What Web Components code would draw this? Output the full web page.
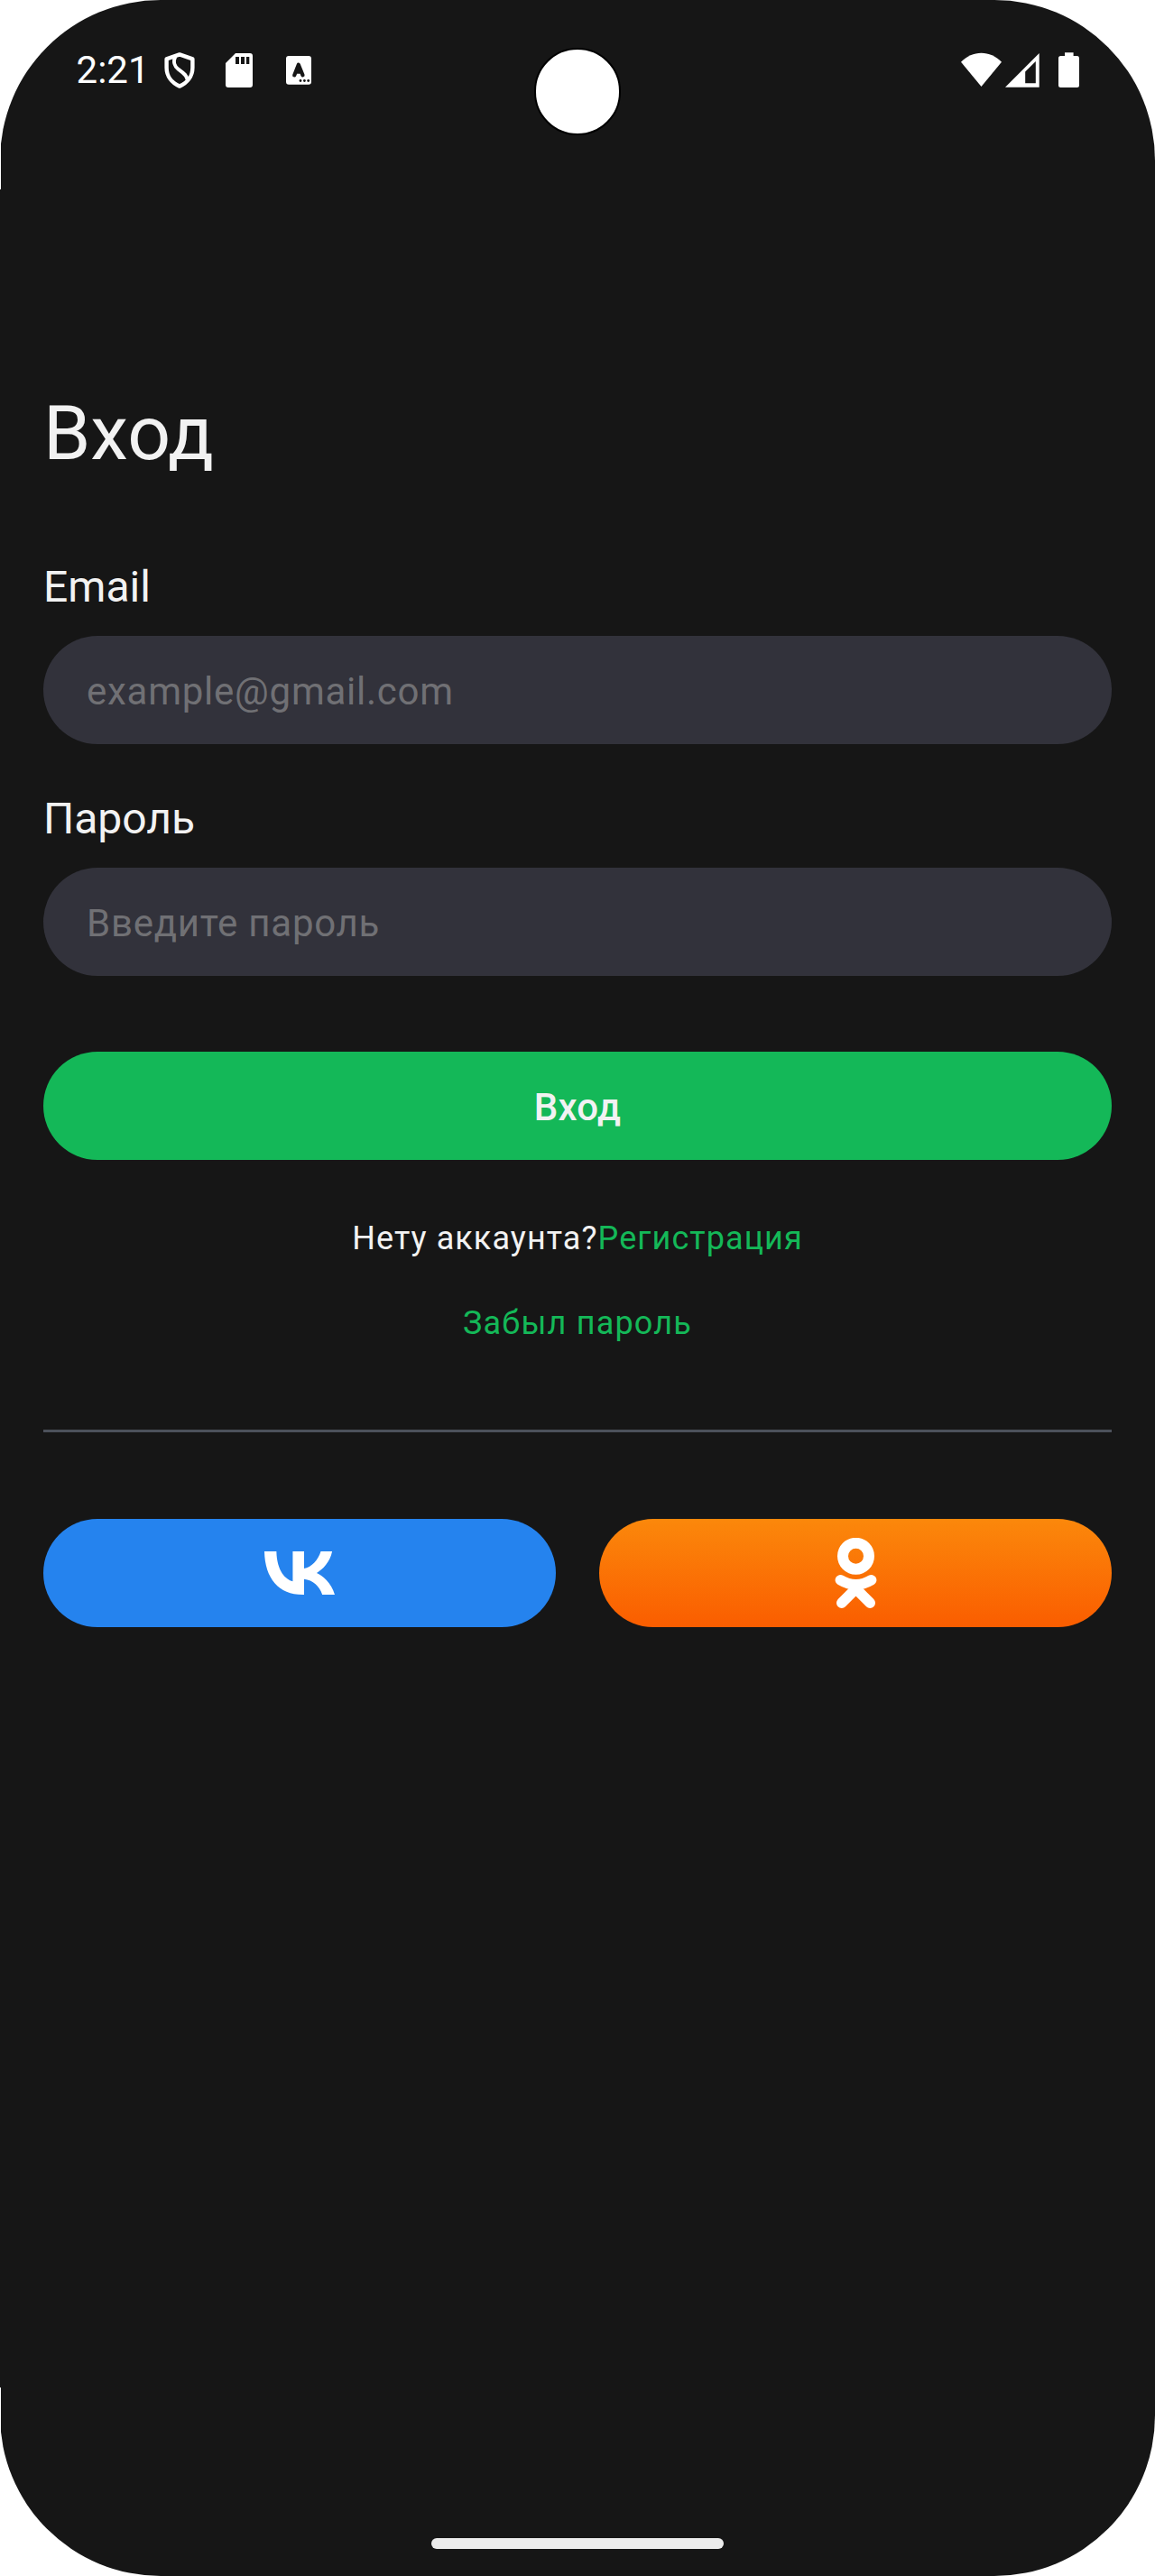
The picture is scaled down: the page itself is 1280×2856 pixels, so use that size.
<!DOCTYPE html>
<html lang="ru">
<head>
<meta charset="utf-8">
<title>Вход</title>
<style>
  html, body { margin: 0; background: #fff; }
  body { font-family: Roboto, "Noto Sans", sans-serif; color: #f2f2f2; }
</style>
</head>
<body>
<phone-screen>
  <status-bar slot="status" time="2:21"></status-bar>
  <login-page></login-page>
</phone-screen>

<script>
const define = (name, html) => {
  const template = document.createElement('template');
  template.innerHTML = html;
  customElements.define(name, class extends HTMLElement {
    constructor() {
      super();
      this.attachShadow({ mode: 'open' }).append(template.content.cloneNode(true));
    }
    connectedCallback() {
      for (const el of this.shadowRoot.querySelectorAll('[data-attr]')) {
        el.textContent = this.getAttribute(el.dataset.attr) || '';
      }
    }
  });
};

define('phone-screen', `
  <style>
    :host {
      display: flex; flex-direction: column; position: relative; box-sizing: border-box;
      width: 1280px; height: 2856px; overflow: hidden; border-radius: 178px;
      background:
        linear-gradient(#fff, #fff) 0 150px / 1px 60px no-repeat,
        linear-gradient(#fff, #fff) 0 2647px / 1px 60px no-repeat,
        #161616;
    }
    .camera {
      position: absolute; left: 591.5px; top: 53px; width: 92.500px; height: 92.500px;
      border: 2.5px solid #000; border-radius: 50%; background: #fff;
    }
    main { flex: 1; }
    .nav { display: flex; justify-content: center; padding-bottom: 30px; }
    .handle { width: 324px; height: 12px; border-radius: 6px; background: #ececec; }
  </style>
  <slot name="status"></slot>
  <div class="camera"></div>
  <main><slot></slot></main>
  <div class="nav"><div class="handle"></div></div>
`);

define('status-bar', `
  <style>
    :host {
      display: flex; justify-content: space-between; align-items: center;
      box-sizing: border-box; height: 156px; padding: 0 83px 0 84.6px; color: #fff;
    }
    .group { display: flex; align-items: center; }
    span { font-size: 42px; line-height: 48px; }
    svg { display: block; flex: none; }
  </style>
  <div class="group">
    <span data-attr="time"></span>
    <svg style="margin-left:15.4px" width="36" height="44" viewBox="181 56 36 44" fill="none" stroke="#fff" stroke-linejoin="round">
      <path stroke-width="4.4" d="M199 60.4 L213.4 65.4 V75 C213.4 84.5 207.5 92 199 95.6 C190.500 92 184.600 84.500 184.600 75 V65.400 Z"/>
      <path stroke-width="4" d="M194.400 62.500 C191.500 68 193.500 73.500 197.500 76.700 C202.500 80.500 207.300 83 207.400 88.500"/>
    </svg>
    <svg style="margin-left:33px" width="30" height="38" viewBox="250 59 30 38" fill="#fff">
      <path fill-rule="evenodd" d="M261 59 H277 Q280 59 280 62 V94 Q280 97 277 97 H253 Q250 97 250 94 V70 Z M261 63 V71 H265 V63 Z M267 63 V71 H271 V63 Z M273 63 V71 H276.300 V63 Z"/>
    </svg>
    <svg style="margin-left:37px" width="28" height="32" viewBox="317 62 28 32">
      <rect x="317" y="62" width="28" height="31.700" rx="3" fill="#fff"/>
      <path d="M326.200 83.400 L330.800 71.700 L335.500 83.400 M328 79.700 H333.700" fill="none" stroke="#161616" stroke-width="4.200" stroke-linecap="round" stroke-linejoin="round"/>
      <g fill="#161616"><circle cx="333" cy="89.500" r="1.400"/><circle cx="337.400" cy="89.500" r="1.400"/><circle cx="341.700" cy="89.500" r="1.400"/></g>
    </svg>
  </div>
  <svg width="132" height="40" viewBox="1065 58 132 40" fill="#fff">
    <path d="M1087.500 96 L1065 68.800 C1077.500 55.300 1097.500 55.300 1110 68.800 Z"/>
    <path fill-rule="evenodd" d="M1114 96.700 L1151.700 59 V96.700 Z M1136.200 79.500 V92.300 H1147.800 V68 Z"/>
    <path d="M1180 58.300 H1189.600 V62 H1194 Q1196 62 1196 64.500 V94.500 Q1196 97 1193.500 97 H1175.500 Q1173 97 1173 94.500 V64.500 Q1173 62 1175.500 62 H1180 Z"/>
  </svg>
`);

define('form-field', `
  <style>
    :host { display: block; }
    label { display: block; font-size: 48px; line-height: 56px; }
    .box {
      display: flex; align-items: center; box-sizing: border-box; height: 120px;
      margin-top: 26px; padding: 4px 48px 0; border-radius: 60px; background: #32323b;
      color: #707074; font-size: 42px; line-height: 48px; letter-spacing: .75px;
    }
  </style>
  <label data-attr="label"></label>
  <div class="box"><span data-attr="placeholder"></span></div>
`);

define('primary-button', `
  <style>
    :host {
      display: flex; align-items: center; justify-content: center; box-sizing: border-box;
      height: 120px; padding-top: 4px; border-radius: 60px; background: #14b858;
      font-size: 42px; line-height: 48px; font-weight: 500; letter-spacing: .3px;
    }
  </style>
  <slot></slot>
`);

define('text-link', `
  <style>:host { display: inline-block; color: #14b858; }</style><slot></slot>
`);

define('social-button', `
  <style>
    :host {
      display: flex; flex: 1; align-items: center; justify-content: center;
      height: 120px; border-radius: 60px; background: var(--fill);
    }
  </style>
  <slot></slot>
`);

define('vk-logo', `
  <style>:host, svg { display: block; }</style>
  <svg width="78" height="48" viewBox="8.1 14.6 32.02 19.98" preserveAspectRatio="none" fill="#fff">
    <path d="M25.54 34.58C14.6 34.58 8.36 27.08 8.1 14.6H13.58C13.76 23.76 17.8 27.64 21 28.44V14.6H26.16V22.5C29.32 22.16 32.64 18.56 33.76 14.6H38.92C38.06 19.48 34.46 23.08 31.9 24.56C34.46 25.76 38.56 28.9 40.12 34.58H34.44C33.22 30.78 30.18 27.84 26.16 27.44V34.58Z"/>
  </svg>
`);

define('ok-logo', `
  <style>:host, svg { display: block; }</style>
  <svg width="47" height="78" viewBox="924.500 1705 47 78" fill="none" stroke="#fff" stroke-linecap="round">
    <circle cx="948" cy="1725.300" r="14.500" stroke-width="12"/>
    <path stroke-width="11.600" d="M930.900 1751.800 Q948 1762 965.100 1751.800 M932.300 1777.100 L948 1761.400 L963.700 1777.100"/>
  </svg>
`);

define('login-page', `
  <style>
    :host { display: flex; flex-direction: column; padding: 275px 48px 0; }
    h1 { margin: 0 0 92px; font-size: 84px; line-height: 100px; font-weight: 400; }
    form-field + form-field { margin-top: 55px; }
    primary-button { margin-top: 84px; }
    p { margin: 0; text-align: center; font-size: 36px; line-height: 42px; }
    .signup { display: flex; justify-content: center; margin-top: 66px; letter-spacing: 1.08px; }
    .forgot { margin-top: 52px; letter-spacing: 1.2px; }
    hr { width: 100%; height: 3px; margin: 97px 0 96px; border: 0; background: #4c515b; }
    .social { display: flex; gap: 48px; }
    .vk { --fill: #2583ee; }
    .ok { --fill: linear-gradient(#fb880b, #fa5d00); }
  </style>
  <h1>Вход</h1>
  <form-field label="Email" placeholder="example@gmail.com"></form-field>
  <form-field label="Пароль" placeholder="Введите пароль"></form-field>
  <primary-button>Вход</primary-button>
  <p class="signup">Нету аккаунта?<text-link>Регистрация</text-link></p>
  <p class="forgot"><text-link>Забыл пароль</text-link></p>
  <hr>
  <div class="social">
    <social-button class="vk"><vk-logo></vk-logo></social-button>
    <social-button class="ok"><ok-logo></ok-logo></social-button>
  </div>
`);
</script>
</body>
</html>
